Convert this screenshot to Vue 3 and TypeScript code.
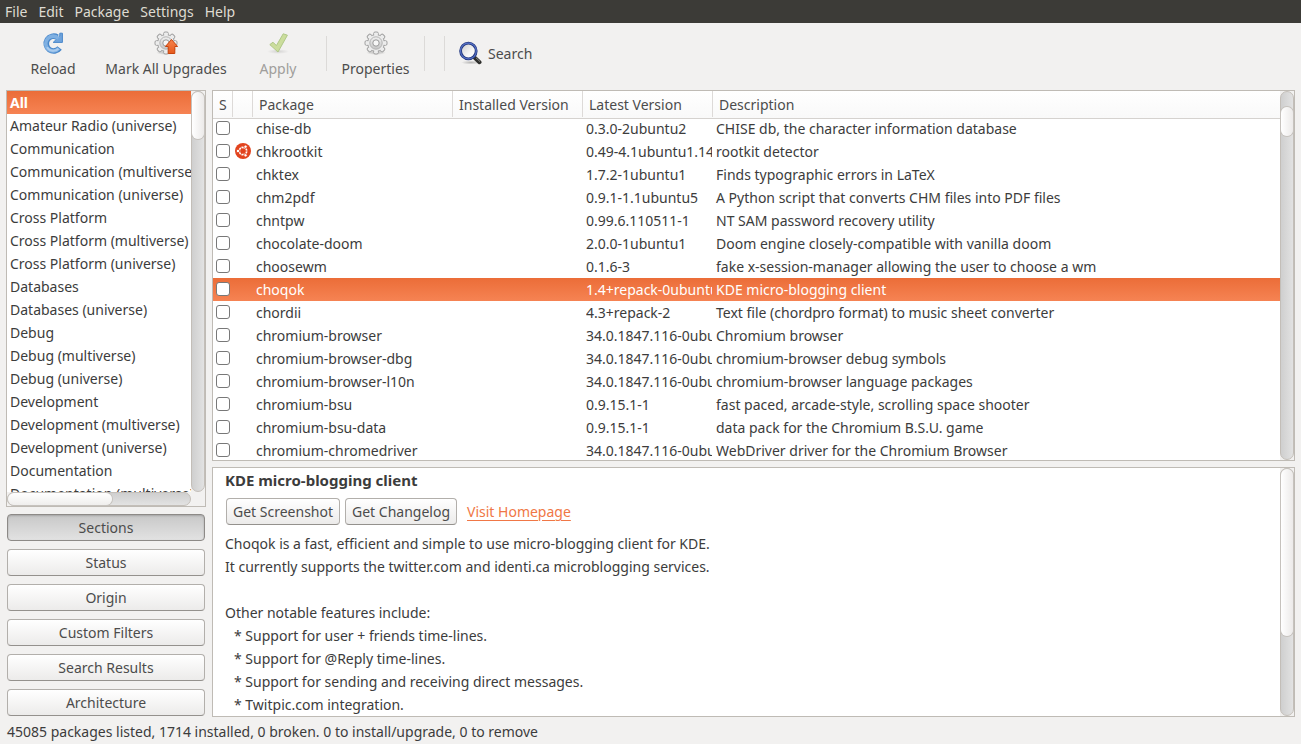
<script setup lang="ts">
import { ref } from 'vue'

interface Pkg {
  name: string
  version: string
  description: string
  supported?: boolean
}

const menus: string[] = ['File', 'Edit', 'Package', 'Settings', 'Help']

const sections: string[] = [
  'All',
  'Amateur Radio (universe)',
  'Communication',
  'Communication (multiverse)',
  'Communication (universe)',
  'Cross Platform',
  'Cross Platform (multiverse)',
  'Cross Platform (universe)',
  'Databases',
  'Databases (universe)',
  'Debug',
  'Debug (multiverse)',
  'Debug (universe)',
  'Development',
  'Development (multiverse)',
  'Development (universe)',
  'Documentation',
  'Documentation (multiverse)',
]

const views: string[] = ['Sections', 'Status', 'Origin', 'Custom Filters', 'Search Results', 'Architecture']

const packages: Pkg[] = [
  { name: 'chise-db', version: '0.3.0-2ubuntu2', description: 'CHISE db, the character information database' },
  { name: 'chkrootkit', version: '0.49-4.1ubuntu1.14', description: 'rootkit detector', supported: true },
  { name: 'chktex', version: '1.7.2-1ubuntu1', description: 'Finds typographic errors in LaTeX' },
  { name: 'chm2pdf', version: '0.9.1-1.1ubuntu5', description: 'A Python script that converts CHM files into PDF files' },
  { name: 'chntpw', version: '0.99.6.110511-1', description: 'NT SAM password recovery utility' },
  { name: 'chocolate-doom', version: '2.0.0-1ubuntu1', description: 'Doom engine closely-compatible with vanilla doom' },
  { name: 'choosewm', version: '0.1.6-3', description: 'fake x-session-manager allowing the user to choose a wm' },
  { name: 'choqok', version: '1.4+repack-0ubuntu1', description: 'KDE micro-blogging client' },
  { name: 'chordii', version: '4.3+repack-2', description: 'Text file (chordpro format) to music sheet converter' },
  { name: 'chromium-browser', version: '34.0.1847.116-0ubuntu2', description: 'Chromium browser' },
  { name: 'chromium-browser-dbg', version: '34.0.1847.116-0ubuntu2', description: 'chromium-browser debug symbols' },
  { name: 'chromium-browser-l10n', version: '34.0.1847.116-0ubuntu2', description: 'chromium-browser language packages' },
  { name: 'chromium-bsu', version: '0.9.15.1-1', description: 'fast paced, arcade-style, scrolling space shooter' },
  { name: 'chromium-bsu-data', version: '0.9.15.1-1', description: 'data pack for the Chromium B.S.U. game' },
  { name: 'chromium-chromedriver', version: '34.0.1847.116-0ubuntu2', description: 'WebDriver driver for the Chromium Browser' },
]

const features: string[] = [
  'Support for user + friends time-lines.',
  'Support for @Reply time-lines.',
  'Support for sending and receiving direct messages.',
  'Twitpic.com integration.',
]

const section = ref('All')
const view = ref('Sections')
const selected = ref('choqok')
const teeth: number[] = [0, 45, 90, 135, 180, 225, 270, 315]
</script>

<template>
  <div class="window">
    <nav class="menubar">
      <button v-for="m in menus" :key="m" type="button">{{ m }}</button>
    </nav>

    <svg class="defs" aria-hidden="true">
      <defs>
        <linearGradient id="gearFill" x1="0" y1="0" x2="0" y2="1">
          <stop offset="0" stop-color="#f0f0f0" />
          <stop offset="1" stop-color="#c4c4c4" />
        </linearGradient>
        <linearGradient id="arrowFill" x1="0" y1="0" x2="0" y2="1">
          <stop offset="0" stop-color="#f7834c" />
          <stop offset="1" stop-color="#e65a1c" />
        </linearGradient>
        <linearGradient id="lensFill" x1="0" y1="0" x2="1" y2="1">
          <stop offset="0" stop-color="#c9c9c9" />
          <stop offset="0.6" stop-color="#f6f6f6" />
          <stop offset="1" stop-color="#ffffff" />
        </linearGradient>
        <radialGradient id="shade">
          <stop offset="0" stop-color="#000" stop-opacity="0.25" />
          <stop offset="1" stop-color="#000" stop-opacity="0" />
        </radialGradient>
        <g id="gear">
          <ellipse cx="12" cy="21.5" rx="10" ry="2.5" fill="url(#shade)" />
          <g fill="#ececec" stroke="#a0a0a0" stroke-width="1">
            <rect v-for="a in teeth" :key="a" x="9.7" y="1" width="4.6" height="5" rx="1.4" :transform="`rotate(${a} 12 12)`" />
            <circle cx="12" cy="12" r="8.4" />
          </g>
          <rect v-for="a in teeth" :key="'f' + a" x="10.2" y="2.2" width="3.6" height="4" fill="#ececec" :transform="`rotate(${a} 12 12)`" />
          <circle cx="12" cy="12" r="6.2" fill="url(#gearFill)" stroke="#b4b4b4" stroke-width="1" />
          <circle cx="12" cy="12" r="3.2" fill="#f7f7f7" stroke="#9a9a9a" stroke-width="1" />
        </g>
      </defs>
    </svg>

    <header class="toolbar">
      <button type="button" class="tool reload">
        <svg viewBox="0 0 24 24" width="24" height="24" aria-hidden="true">
          <path d="M18.6 17 A7.4 7.4 0 1 1 16.4 6.2" fill="none" stroke="#4a88ca" stroke-width="5.6" />
          <path d="M12.2 11.4 H21.4 V2.2 H18.8 V5 Z" fill="#6fa4dc" stroke="#4a88ca" />
          <path d="M17.8 17.3 A7.4 7.4 0 1 1 17.4 7.4" fill="none" stroke="#7fb0e2" stroke-width="3.6" />
          <path d="M17.4 17.8 A7.4 7.4 0 0 1 6 16.2" fill="none" stroke="#a9cbee" stroke-width="2" />
        </svg>
        <span>Reload</span>
      </button>
      <button type="button" class="tool upgrades">
        <svg viewBox="0 0 24 24" width="24" height="24" aria-hidden="true">
          <use href="#gear" />
          <path d="M17.5 8.5 L23.6 15.5 H20.8 V22.5 H14.2 V15.5 H11.4 Z" fill="url(#arrowFill)" stroke="#c8430c" />
        </svg>
        <span>Mark All Upgrades</span>
      </button>
      <button type="button" class="tool apply" disabled>
        <svg viewBox="0 0 24 24" width="24" height="24" aria-hidden="true">
          <ellipse cx="12" cy="20.5" rx="11" ry="2.5" fill="url(#shade)" opacity="0.5" />
          <path d="M3.8 13.6 L7 11.2 L10.4 14.6 L17.2 2.8 L21.4 4.2 L12 21 Z" fill="#cbdd9c" stroke="#b0c888" stroke-linejoin="round" />
        </svg>
        <span>Apply</span>
      </button>
      <i class="sep first"></i>
      <button type="button" class="tool properties">
        <svg viewBox="0 0 24 24" width="24" height="24" aria-hidden="true"><use href="#gear" /></svg>
        <span>Properties</span>
      </button>
      <i class="sep"></i>
      <i class="sep last"></i>
      <button type="button" class="search">
        <svg viewBox="0 0 24 24" width="24" height="24" aria-hidden="true">
          <ellipse cx="13" cy="21.5" rx="10" ry="2" fill="url(#shade)" />
          <path d="M17 17 L21.5 21.2" stroke="#2e2e2c" stroke-width="4" stroke-linecap="round" />
          <path d="M18 16.8 L22 20.6" stroke="#8a8a86" stroke-width="1" />
          <circle cx="10.4" cy="10" r="7.8" fill="url(#lensFill)" stroke="#22377f" stroke-width="2.8" />
          <circle cx="10.4" cy="10" r="7.9" fill="none" stroke="#5670c4" stroke-width="1.2" />
        </svg>
        <span>Search</span>
      </button>
    </header>

    <main class="body">
      <aside class="side">
        <div class="panel sections">
          <ul>
            <li v-for="s in sections" :key="s" :class="{ on: s === section }" @click="section = s">{{ s }}</li>
          </ul>
          <div class="track vertical"><div class="thumb short"></div></div>
          <div class="track horizontal"><div class="thumb"></div></div>
        </div>
        <div class="views">
          <button v-for="v in views" :key="v" type="button" :class="['push', { down: v === view }]" @click="view = v">{{ v }}</button>
        </div>
      </aside>

      <div class="content">
        <section class="panel packages">
          <div class="clip">
            <table>
              <colgroup>
                <col class="c-mark" /><col class="c-mark" /><col class="c-name" /><col class="c-ver" /><col class="c-ver" /><col />
              </colgroup>
              <thead>
                <tr>
                  <th>S</th>
                  <th></th>
                  <th>Package</th>
                  <th>Installed Version</th>
                  <th>Latest Version</th>
                  <th>Description</th>
                </tr>
              </thead>
              <tbody>
                <tr v-for="p in packages" :key="p.name" :class="{ on: p.name === selected }" @click="selected = p.name">
                  <td><input type="checkbox" :aria-label="p.name" /></td>
                  <td>
                    <svg v-if="p.supported" viewBox="0 0 16 16" width="16" height="16" aria-hidden="true">
                      <circle cx="8" cy="8" r="8" fill="#e2431e" />
                      <circle cx="8" cy="8" r="3.7" fill="none" stroke="#fff" stroke-width="1.7" />
                      <g v-for="a in [0, 120, 240]" :key="a" :transform="`rotate(${a} 8 8)`">
                        <circle cx="3" cy="8" r="1.7" fill="#fff" stroke="#e2431e" stroke-width="0.8" />
                        <path d="M10.5 8 H13.5" stroke="#e2431e" stroke-width="0.8" />
                      </g>
                    </svg>
                  </td>
                  <td>{{ p.name }}</td>
                  <td></td>
                  <td><div class="version">{{ p.version }}</div></td>
                  <td>{{ p.description }}</td>
                </tr>
              </tbody>
            </table>
          </div>
          <div class="track vertical"><div class="thumb mid"></div></div>
        </section>

        <section class="panel details">
          <article>
            <h1>KDE micro-blogging client</h1>
            <div class="actions">
              <button type="button" class="push">Get Screenshot</button>
              <button type="button" class="push">Get Changelog</button>
              <a href="#">Visit Homepage</a>
            </div>
            <p>Choqok is a fast, efficient and simple to use micro-blogging client for KDE.<br />It currently supports the twitter.com and identi.ca microblogging services.</p>
            <p>Other notable features include:</p>
            <ul>
              <li v-for="f in features" :key="f">* {{ f }}</li>
            </ul>
          </article>
          <div class="track vertical"><div class="thumb long"></div></div>
        </section>
      </div>
    </main>

    <footer>45085 packages listed, 1714 installed, 0 broken. 0 to install/upgrade, 0 to remove</footer>
  </div>
</template>

<style>
body {
  margin: 0;
  background: #f2f1f0;
}
</style>

<style scoped>
.window {
  display: flex;
  flex-direction: column;
  height: 100vh;
  overflow: hidden;
  background: #f2f1f0;
  color: #3c3c3c;
  font: 14px/23px "Noto Sans", "Open Sans", sans-serif;
}
.window * {
  box-sizing: border-box;
}
button {
  margin: 0;
  padding: 0;
  border: 0;
  background: none;
  color: #4c4c4c;
  font: inherit;
}
.defs {
  position: absolute;
  width: 0;
  height: 0;
}
.menubar {
  display: flex;
  flex: none;
  gap: 11px;
  height: 23px;
  padding-left: 5px;
  background: #3c3b37;
}
.menubar button {
  color: #dfdbd2;
}
.toolbar {
  display: flex;
  flex: none;
  align-items: flex-start;
  height: 67px;
  padding: 8px 0 0 18px;
}
.tool {
  display: flex;
  flex-direction: column;
  align-items: center;
  gap: 2px;
  white-space: nowrap;
}
.reload {
  width: 70px;
}
.upgrades {
  width: 156px;
}
.apply {
  width: 68px;
  color: #a09e9b;
}
.properties {
  width: 97px;
}
.sep {
  width: 1px;
  height: 35px;
  margin-top: 5px;
  background: #dcdad8;
}
.sep.first {
  margin-left: 14px;
}
.sep.last {
  margin-left: 19px;
}
.search {
  display: flex;
  align-items: center;
  gap: 6px;
  height: 44px;
  padding-left: 13px;
}
.body {
  display: grid;
  grid-template-columns: 200px minmax(0, 1fr);
  gap: 6px;
  flex: 1;
  min-height: 0;
  padding: 0 6px;
}
.side,
.content {
  display: flex;
  flex-direction: column;
  min-height: 0;
}
.panel {
  display: grid;
  grid-template-columns: minmax(0, 1fr) 14px;
  min-height: 0;
  overflow: hidden;
  border: 1px solid #bfbbb5;
  background: #f2f1f0;
}
.sections {
  flex: 1;
  grid-template-rows: minmax(0, 1fr) 14px;
}
.sections ul {
  overflow: hidden;
  margin: 0;
  padding: 0;
  background: #fff;
  list-style: none;
}
.sections li {
  overflow: hidden;
  padding-left: 3px;
  white-space: nowrap;
}
.on {
  background: linear-gradient(#eb6d38, #f68353);
  color: #fff;
}
.sections .on {
  font-weight: bold;
}
.track {
  display: flex;
  border: 1px solid #c3beb8;
  border-radius: 7px;
  background: linear-gradient(90deg, #cfcfcf, #e2e2e2);
}
.track.vertical {
  flex-direction: column;
}
.track.horizontal {
  background: linear-gradient(#cfcfcf, #e2e2e2);
}
.thumb {
  border-radius: 6px;
  background: linear-gradient(90deg, #fff, #eceae9);
  box-shadow: 0 0 0 1px #c6c2bd;
}
.horizontal .thumb {
  width: 57%;
  background: linear-gradient(#fff, #efeeed);
}
.thumb.short {
  height: 47px;
}
.thumb.mid {
  height: 29px;
  margin-top: 15px;
}
.thumb.long {
  height: 68%;
}
.views {
  display: flex;
  flex: none;
  flex-direction: column;
  gap: 8px;
  padding: 7px 1px 1px;
}
.push {
  height: 27px;
  border: 1px solid #b2afab;
  border-bottom-color: #94918d;
  border-radius: 4px;
  background: linear-gradient(#fff, #ecebea);
}
.push.down {
  border-color: #8d8a87;
  background: linear-gradient(#c8c8c8, #e2e2e2);
  box-shadow: inset 0 1px 2px #a5a5a5;
}
.content {
  gap: 6px;
}
.packages {
  flex: 371 1 0;
}
.details {
  flex: 250 1 0;
}
.clip {
  overflow: hidden;
  background: #fff;
}
table {
  width: 100%;
  border-collapse: separate;
  border-spacing: 0;
  table-layout: fixed;
}
.c-mark {
  width: 20px;
}
.c-name {
  width: 200px;
}
.c-ver {
  width: 130px;
}
th {
  height: 26px;
  padding: 1px 0 0 6px;
  border-right: 1px solid #dddad8;
  background: linear-gradient(#fff, #f9f9f9);
  box-shadow: 0 1px #f9f9f9, 0 2px #d5d2cf;
  color: #4c4c4c;
  font-weight: normal;
  text-align: left;
  white-space: nowrap;
}
th:last-child {
  border-right: 0;
}
td {
  height: 23px;
  overflow: hidden;
  padding: 0 0 0 3px;
  white-space: nowrap;
}
.version {
  overflow: hidden;
  margin-right: 1px;
}
td svg {
  display: block;
  margin: 0 0 2px -1px;
}
input {
  display: block;
  width: 14px;
  height: 14px;
  margin: 0 0 2px;
  border: 1px solid #787878;
  border-radius: 3px;
  background: #fff;
  appearance: none;
}
article {
  overflow: hidden;
  padding: 1px 12px 0;
  background: #fff;
}
h1 {
  margin: 0;
  font-size: 15px;
  line-height: 23px;
}
.actions {
  display: flex;
  align-items: center;
  gap: 5px;
  margin: 6px 0 7px 1px;
}
.actions .push {
  padding: 0 6px;
}
a {
  margin-left: 5px;
  color: #f07746;
  text-underline-offset: 3px;
}
p {
  margin: 0 0 23px;
}
p + ul {
  margin: -23px 0 0;
  padding: 0 0 0 9px;
  list-style: none;
}
footer {
  flex: none;
  height: 27px;
  padding: 3px 7px;
}
</style>
